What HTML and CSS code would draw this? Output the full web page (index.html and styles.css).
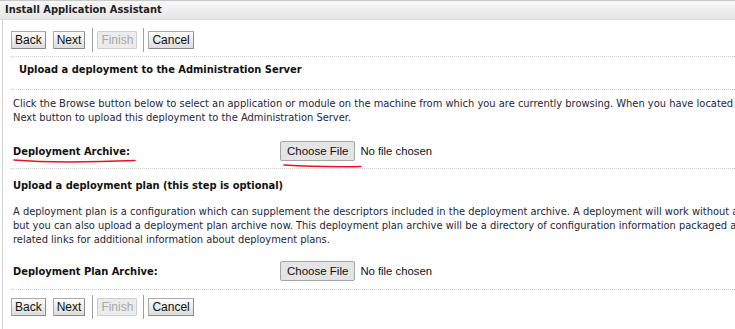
FILE: index.html
```html
<!DOCTYPE html>
<html lang="en">

<head>
    <meta charset="UTF-8">
    <title>Install Application Assistant</title>
    <link rel="stylesheet" href="styles.css">
</head>

<body>
    <div class="header">Install Application Assistant</div>
    <div class="content">
        <div class="toolbar">
            <button class="btn">Back</button>
            <button class="btn">Next</button>
            <span class="sep"></span>
            <button class="btn" disabled>Finish</button>
            <span class="sep"></span>
            <button class="btn">Cancel</button>
        </div>

        <div class="rule top"></div>
        <h2 class="title first">Upload a deployment to the Administration Server</h2>
        <div class="rule"></div>

        <p class="text first">Click the Browse button below to select an application or module on the machine from which you are currently browsing. When you have located the file, click the<br>Next button to upload this deployment to the Administration Server.</p>

        <div class="field first">
            <label class="label">Deployment Archive:</label>
            <div class="picker">
                <span class="choose">Choose File</span>
                <span class="chosen">No file chosen</span>
            </div>
            <svg class="mark mark-label" width="124" height="6" viewBox="0 0 124 6"><path d="M1 2 C30 4.5 70 4.5 122 2.5" fill="none" stroke="#e8102a" stroke-width="1.5" stroke-linecap="round"/></svg>
            <svg class="mark mark-file" width="80" height="6" viewBox="0 0 80 6"><path d="M1 2 C25 3.5 50 4 78 3.5" fill="none" stroke="#e8102a" stroke-width="1.5" stroke-linecap="round"/></svg>
        </div>

        <div class="rule mid"></div>
        <h2 class="title second">Upload a deployment plan (this step is optional)</h2>

        <p class="text second">A deployment plan is a configuration which can supplement the descriptors included in the deployment archive. A deployment will work without a deployment plan,<br>but you can also upload a deployment plan archive now. This deployment plan archive will be a directory of configuration information packaged as a JAR file. See the<br>related links for additional information about deployment plans.</p>

        <div class="field second">
            <label class="label">Deployment Plan Archive:</label>
            <div class="picker">
                <span class="choose">Choose File</span>
                <span class="chosen">No file chosen</span>
            </div>
        </div>

        <div class="rule end"></div>
        <div class="toolbar bottom">
            <button class="btn">Back</button>
            <button class="btn">Next</button>
            <span class="sep"></span>
            <button class="btn" disabled>Finish</button>
            <span class="sep"></span>
            <button class="btn">Cancel</button>
        </div>
    </div>
</body>

</html>
```

FILE: styles.css
```css
* {
    margin: 0;
    padding: 0;
    box-sizing: border-box;
}

body {
    font-family: 'DejaVu Sans Condensed', 'DejaVu Sans', sans-serif;
    font-size: 11px;
    color: #262636;
    background: #fff;
    overflow: hidden;
}

.header {
    height: 20px;
    line-height: 18px;
    padding-left: 5px;
    font-weight: bold;
    font-size: 11px;
    color: #222;
    background: linear-gradient(#f8f8f8, #e5e5e5);
    border-top: 1px solid #c9c9c9;
    border-bottom: 1px solid #dcdcdc;
}

.content {
    margin-left: 2px;
    border-left: 1px solid #d4d4d4;
    padding-left: 8px;
    min-height: 320px;
    overflow: hidden;
}

/* wizard buttons */
.toolbar {
    display: flex;
    align-items: center;
    padding-top: 11px;
    height: 29px;
}

.toolbar.bottom {
    padding-top: 8px;
    height: 26px;
}

.btn {
    font-family: 'Liberation Sans', Arial, sans-serif;
    font-size: 12px;
    height: 18px;
    padding: 0 3px;
    margin-right: 7px;
    color: #111;
    background: linear-gradient(#fdfdfd, #dcdcdc);
    border: 1px solid #a9a9a9;
    border-right-color: #8a8a8a;
    border-bottom-color: #8a8a8a;
    border-radius: 1px;
}

.btn:disabled {
    color: #a8a8a8;
    background: #ececec;
    border-color: #cfcfcf;
    margin-right: 6px;
}

.sep {
    width: 1px;
    height: 24px;
    background: #a0a0a0;
    margin-right: 4px;
}

.rule {
    border-top: 1px dotted #cfcfcf;
}

.rule.top {
    margin-top: 7px;
}

.rule.mid {
    margin-top: 7px;
}

.rule.end {
    margin-top: 8px;
}

.title {
    font-size: 11px;
    font-weight: bold;
    line-height: 14px;
    color: #111;
}

.title.first {
    padding: 6px 0 12px 8px;
}

.title.second {
    padding: 10px 0 0 2px;
}

.text {
    padding-left: 2px;
    line-height: 14px;
    white-space: nowrap;
}

.text.first {
    margin-top: 7px;
}

.text.second {
    margin-top: 12px;
}

.field {
    position: relative;
    display: flex;
    align-items: center;
    height: 20px;
}

.field.first {
    margin-top: 16px;
}

.field.second {
    margin-top: 14px;
}

.label {
    width: 269px;
    padding-left: 2px;
    font-weight: bold;
    font-size: 11px;
    color: #111;
}

.picker {
    display: flex;
    align-items: center;
    font-family: 'Liberation Sans', Arial, sans-serif;
    color: #111;
}

.choose {
    display: inline-block;
    height: 20px;
    line-height: 18px;
    padding: 0 6px;
    font-size: 11.5px;
    background: #e4e4e4;
    border: 1px solid #a6a6a6;
    border-radius: 2px;
    margin-right: 5px;
}

.chosen {
    font-size: 11.3px;
}

/* red pen marks over the form */
.mark {
    position: absolute;
}

.mark-label {
    left: 2px;
    top: 17px;
}

.mark-file {
    left: 272px;
    top: 22px;
}
```
